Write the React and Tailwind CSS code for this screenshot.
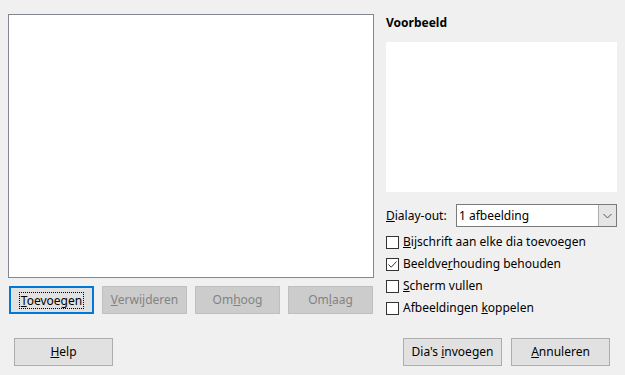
import React from 'react';

const font = { fontFamily: '"Noto Sans", "Open Sans", sans-serif' };

function Btn({ children, className = '', disabled, focused }) {
  let cls = 'flex items-center justify-center h-[28px] text-[12px] ';
  if (focused) cls += 'border-2 border-[#0078d7] bg-[#e1e1e1] text-black';
  else if (disabled) cls += 'border border-[#bfbfbf] bg-[#cccccc] text-[#838383]';
  else cls += 'border border-[#adadad] bg-[#e1e1e1] text-black';
  return (
    <div className={`${cls} ${className}`}>
      {focused ? (
        <span className="border border-dotted border-black px-[1px] leading-[15px]">{children}</span>
      ) : (
        <span>{children}</span>
      )}
    </div>
  );
}

function Check({ checked, children }) {
  return (
    <div className="flex items-center h-[22px] gap-[4px]">
      <div className="w-[13px] h-[13px] border border-[#333333] bg-white flex items-center justify-center">
        {checked && (
          <svg width="11" height="11" viewBox="0 0 11 11">
            <path d="M1.5 5.5 L4.2 8.2 L9.5 2.5" fill="none" stroke="#333333" strokeWidth="1" />
          </svg>
        )}
      </div>
      <span className="text-[12px] text-black">{children}</span>
    </div>
  );
}

export default function App() {
  return (
    <div className="w-[625px] h-[375px] bg-[#f0f0f0] overflow-hidden" style={font}>
      <div className="flex">
        {/* linkerkolom */}
        <div className="pl-[8px] pt-[14px]">
          <div className="w-[366px] h-[264px] bg-white border border-[#828790]" />
          <div className="flex gap-[8px] mt-[8px] pl-[1px]">
            <Btn focused className="w-[85px]"><u>T</u>oevoegen</Btn>
            <Btn disabled className="w-[85px]"><u>V</u>erwijderen</Btn>
            <Btn disabled className="w-[85px]">Om<u>h</u>oog</Btn>
            <Btn disabled className="w-[85px]">Om<u>l</u>aag</Btn>
          </div>
        </div>

        {/* rechterkolom */}
        <div className="ml-[12px] pt-[15px] w-[231px]">
          <div className="text-[12px] font-bold text-black leading-[16px]">Voorbeeld</div>
          <div className="mt-[11px] h-[150px] bg-white" />
          <div className="flex items-center mt-[12px] h-[23px]">
            <span className="text-[12px] text-black w-[70px]"><u>D</u>ialay-out:</span>
            <div className="flex-1 h-[23px] flex border border-[#7a7a7a] bg-white">
              <div className="flex-1 flex items-center pl-[2px] text-[12px] text-black">1 afbeelding</div>
              <div className="w-[18px] h-full bg-[#e5e5e5] border-l border-[#adadad] flex items-center justify-center">
                <svg width="9" height="6" viewBox="0 0 9 6">
                  <path d="M0.5 1 L4.5 5 L8.5 1" fill="none" stroke="#555555" strokeWidth="1" />
                </svg>
              </div>
            </div>
          </div>
          <div className="mt-[4px] flex flex-col">
            <Check><u>B</u>ijschrift aan elke dia toevoegen</Check>
            <Check checked>Beeldve<u>r</u>houding behouden</Check>
            <Check><u>S</u>cherm vullen</Check>
            <Check>Afbeeldingen <u>k</u>oppelen</Check>
          </div>
        </div>
      </div>

      {/* onderste knoppen */}
      <div className="flex items-center mt-[19px] px-[14px]">
        <Btn className="w-[99px]"><u>H</u>elp</Btn>
        <div className="flex-1" />
        <Btn className="w-[99px]">Dia's <u>i</u>nvoegen</Btn>
        <Btn className="w-[99px] ml-[9px] mr-[1px]"><u>A</u>nnuleren</Btn>
      </div>
    </div>
  );
}
